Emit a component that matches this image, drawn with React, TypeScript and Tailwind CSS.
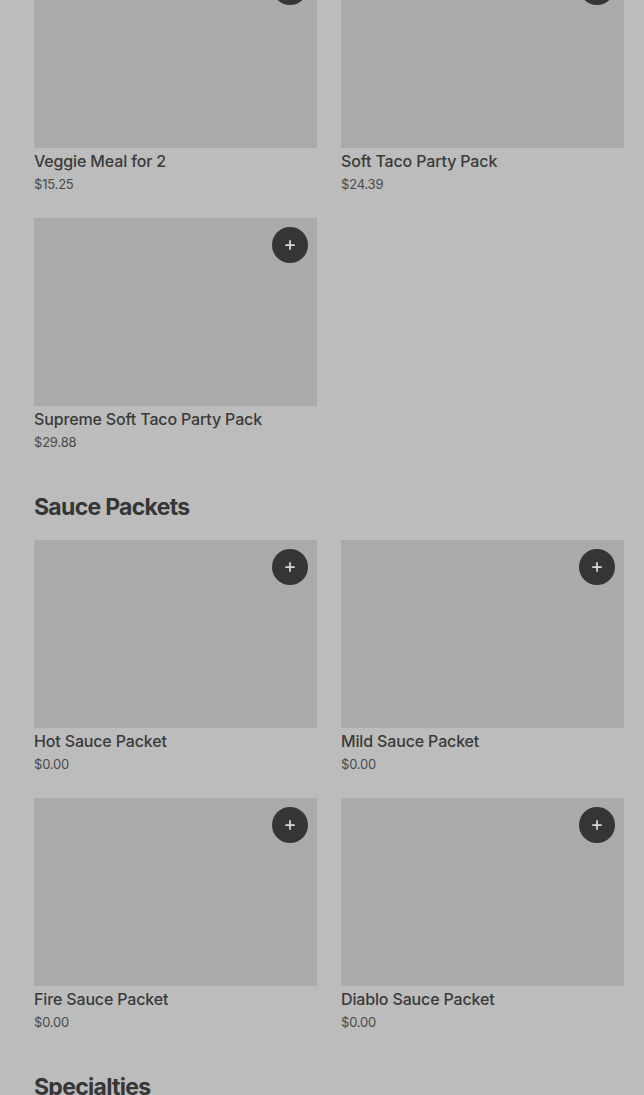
import { Plus } from "lucide-react";

type Item = { name: string; price: string };

const sections: { title?: string; items: Item[] }[] = [
  {
    items: [
      { name: "Veggie Meal for 2", price: "$15.25" },
      { name: "Soft Taco Party Pack", price: "$24.39" },
      { name: "Supreme Soft Taco Party Pack", price: "$29.88" },
    ],
  },
  {
    title: "Sauce Packets",
    items: [
      { name: "Hot Sauce Packet", price: "$0.00" },
      { name: "Mild Sauce Packet", price: "$0.00" },
      { name: "Fire Sauce Packet", price: "$0.00" },
      { name: "Diablo Sauce Packet", price: "$0.00" },
    ],
  },
  {
    title: "Specialties",
    items: [],
  },
];

function ItemCard({ item }: { item: Item }) {
  return (
    <div className="flex flex-col">
      <div className="relative h-[188px] bg-[#aaaaaa]">
        <button
          type="button"
          className="absolute right-[9px] top-[9px] flex h-9 w-9 items-center justify-center rounded-full bg-[#353535] text-[#d8d8d8]"
        >
          <Plus className="h-[14px] w-[14px]" strokeWidth={3} />
        </button>
      </div>
      <div className="mt-[3px] text-[16px] font-medium leading-5 tracking-[-0.15px] text-[#3a3a3a]">
        {item.name}
      </div>
      <div className="mt-[3px] text-[13px] leading-5 tracking-[-0.2px] text-[#4a4a4a]">{item.price}</div>
    </div>
  );
}

export default function App() {
  return (
    <div
      className="h-[1095px] overflow-hidden bg-[#bcbcbc] pl-[34px] pr-[20px]"
      style={{ fontFamily: "Inter, 'Noto Sans', sans-serif" }}
    >
      <div className="-mt-[40px] flex flex-col">
        {sections.map((section, i) => (
          <section key={i} className={i > 0 ? "mt-[39px]" : ""}>
            {section.title ? (
              <h2 className="mb-[17px] text-[23px] font-bold leading-8 tracking-[-0.7px] text-[#363636]">
                {section.title}
              </h2>
            ) : null}
            {section.items.length > 0 ? (
              <div className="grid grid-cols-2 gap-x-6 gap-y-6">
                {section.items.map((item) => (
                  <ItemCard key={item.name} item={item} />
                ))}
              </div>
            ) : null}
          </section>
        ))}
      </div>
    </div>
  );
}
